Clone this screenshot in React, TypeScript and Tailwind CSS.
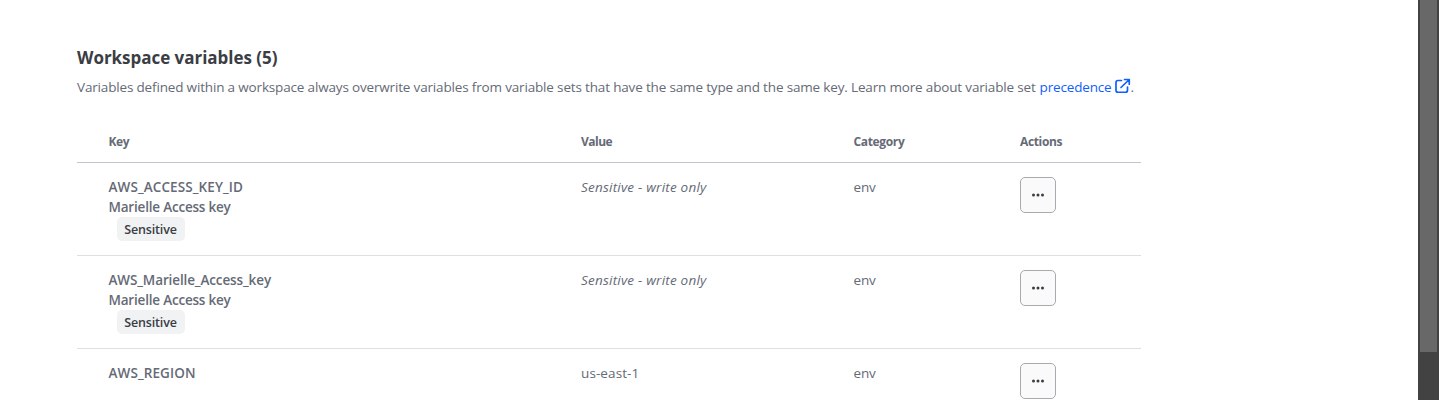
import React from "react";

type Variable = {
  name: string;
  nameClass: string;
  description?: string;
  value: string;
  sensitive: boolean;
  category: string;
};

const variables: Variable[] = [
  { name: "AWS_ACCESS_KEY_ID", nameClass: "tracking-[0.1px]", description: "Marielle Access key", value: "Sensitive - write only", sensitive: true, category: "env" },
  { name: "AWS_Marielle_Access_key", nameClass: "tracking-[-0.12px]", description: "Marielle Access key", value: "Sensitive - write only", sensitive: true, category: "env" },
  { name: "AWS_REGION", nameClass: "tracking-[0.1px]", value: "us-east-1", sensitive: false, category: "env" },
];

const columns = "grid grid-cols-[472.5px_272.5px_166.5px_1fr] pl-[31.5px]";

function ExternalIcon() {
  return (
    <svg className="mb-[3px] ml-[3px] h-4 w-4 shrink-0" viewBox="0 0 16 16" fill="none" stroke="currentColor" strokeWidth="1.7" strokeLinecap="round" strokeLinejoin="round">
      <path d="M6.5 2.5H3c-1.1 0-2 .9-2 2v7.75c0 1.1.9 2 2 2h7.5c1.1 0 2-.9 2-2V9" />
      <path d="M9.5 1.5h4.75V6.25M14 1.75 6 9.5" />
    </svg>
  );
}

function MenuButton() {
  return (
    <button aria-label="Actions" className="flex h-9 w-9 items-center justify-center rounded-[5px] border border-[#a9aab0] bg-[#fafafa] text-[#3b3d45]">
      <svg className="h-4 w-4" viewBox="0 0 16 16" fill="currentColor">
        <circle cx="3.5" cy="8" r="1.5" />
        <circle cx="8" cy="8" r="1.5" />
        <circle cx="12.5" cy="8" r="1.5" />
      </svg>
    </button>
  );
}

export default function App() {
  return (
    <div className="flex h-[400px] overflow-hidden bg-white font-['Open_Sans',sans-serif] text-[13.5px] leading-5 text-[#656a76]">
      <main className="flex-1 pl-[77px] pt-[46px]">
        <div className="w-[1064px]">
          <h1 className="text-[17px] leading-6 font-bold tracking-[-0.03px] text-[#3b3d45]">Workspace variables (5)</h1>
          <p className="mt-[7px] flex items-center whitespace-nowrap tracking-[-0.165px]">
            <span>Variables defined within a workspace always overwrite variables from variable sets that have the same type and the same key. Learn more about variable set</span>
            <a className="ml-1 flex items-center text-[#1060ff]">precedence<ExternalIcon /></a>.
          </p>
          <div className={`${columns} mt-[25px] h-[41px] items-center border-b border-[#c2c5cb] text-[12px] font-bold tracking-[-0.35px]`}>
            <span>Key</span>
            <span className="tracking-[-0.5px]">Value</span>
            <span>Category</span>
            <span>Actions</span>
          </div>
          {variables.map((v) => (
            <div key={v.name} className={`${columns} h-[93px] border-b border-[#dedfe3] pt-[14px]`}>
              <div className="font-semibold">
                <div className={v.nameClass}>{v.name}</div>
                {v.description && <div className="tracking-[-0.2px]">{v.description}</div>}
                {v.sensitive && (
                  <span className="ml-2 flex h-6 w-[68px] items-center justify-center rounded-[5px] bg-[#f1f2f3] pt-px text-[12.5px] tracking-[-0.15px] text-[#3b3d45]">Sensitive</span>
                )}
              </div>
              <div className={v.sensitive ? "tracking-[0.22px] italic" : "tracking-[0.1px]"}>{v.value}</div>
              <div className="tracking-[-0.2px]">{v.category}</div>
              <MenuButton />
            </div>
          ))}
        </div>
      </main>
      <div className="flex w-[21px] justify-center bg-[#424242]">
        <div className="mr-px h-[352px] w-[17px] bg-[#686868]" />
      </div>
    </div>
  );
}
